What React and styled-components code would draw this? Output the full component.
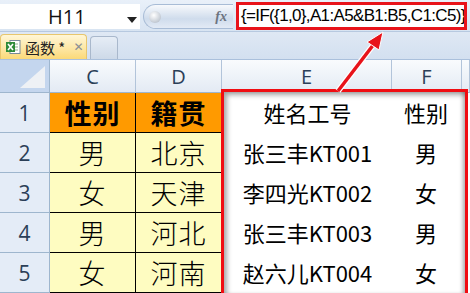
import styled, { createGlobalStyle } from "styled-components";

const Global = createGlobalStyle`
  html, body { margin: 0; padding: 0; }
  body {
    width: 470px;
    height: 293px;
    overflow: hidden;
    background: #fff;
    font-family: "Noto Sans", "Noto Sans CJK SC", sans-serif;
  }
`;

const Page = styled.div`
  position: relative;
  width: 470px;
  height: 293px;
  overflow: hidden;
  display: flex;
  flex-direction: column;
`;

const FormulaBar = styled.div`
  height: 32px;
  flex: none;
  display: flex;
  align-items: stretch;
  padding: 2px 3px 1px 0;
  box-sizing: border-box;
  background: linear-gradient(#e9f0f9, #d8e4f2);
  border-bottom: 1px solid #b7c9e0;
  gap: 3px;
`;

const NameBox = styled.div`
  width: 140px;
  margin: 2px 0 1px;
  background: #fff;
  display: flex;
  align-items: center;
  position: relative;
  font-family: "Open Sans", "Liberation Sans", sans-serif;
  font-size: 20px;
  color: #111;
  span { margin-left: 48px; }
  &::after {
    content: "";
    position: absolute;
    right: 3px;
    top: 13px;
    border-left: 5px solid transparent;
    border-right: 5px solid transparent;
    border-top: 6px solid #222;
  }
`;

const FxPill = styled.div`
  width: 90px;
  margin: 2px 0 1px;
  border-radius: 14px 0 0 14px;
  background: linear-gradient(#f7f9fc, #cfdcec 60%, #e2eaf5);
  border: 1px solid #a8bcd6;
  border-right: none;
  display: flex;
  align-items: center;
  justify-content: space-between;
  padding: 0 6px 0 5px;
  box-sizing: border-box;
`;

const Knob = styled.div`
  width: 12px;
  height: 12px;
  border-radius: 50%;
  background: radial-gradient(circle at 40% 35%, #fff, #a9b3c0);
`;

const Fx = styled.span`
  font-family: "Liberation Serif", serif;
  font-style: italic;
  font-weight: bold;
  font-size: 14px;
  color: #6d7480;
`;

const FormulaBox = styled.div`
  flex: 1;
  border: 3px solid #e8131a;
  background: #fff;
  display: flex;
  align-items: center;
  padding-left: 2px;
  font-family: "Liberation Sans", sans-serif;
  font-size: 17px;
  letter-spacing: -0.65px;
  color: #000;
  white-space: nowrap;
  overflow: hidden;
`;

const TabBar = styled.div`
  height: 27px;
  flex: none;
  display: flex;
  align-items: flex-end;
  gap: 3px;
  background: linear-gradient(#dfe8f4, #d3e0f0);
  border-bottom: 1px solid #aac0dc;
`;

const Tab = styled.div`
  height: ${(p) => (p.$active ? "25px" : "23px")};
  width: ${(p) => (p.$active ? "87px" : "28px")};
  box-sizing: border-box;
  border: 1px solid ${(p) => (p.$active ? "#e7c66d" : "#a9b8cc")};
  border-bottom: none;
  border-radius: 4px 4px 0 0;
  background: ${(p) =>
    p.$active
      ? "linear-gradient(#fff6d6, #fde7a5 55%, #fbd978)"
      : "linear-gradient(#e6edf6, #cdd9e8)"};
  display: flex;
  align-items: center;
  gap: 4px;
  padding-left: 4px;
  white-space: nowrap;
  font-family: "Noto Sans CJK SC", sans-serif;
  font-size: 15px;
  color: #222;
`;

const Close = styled.span`
  margin-left: 4px;
  color: #8a8f96;
  font-family: "DejaVu Sans", sans-serif;
  font-size: 12px;
  font-weight: bold;
`;

const Sheet = styled.div`
  display: grid;
  grid-template-columns: 50px 86px 86px 170px 70px 1fr;
  grid-template-rows: 33px repeat(5, 40px);
`;

const Corner = styled.div`
  background: #c4d6ee;
  border-right: 1px solid #9eb6ce;
  border-bottom: 1px solid #9eb6ce;
  position: relative;
  &::after {
    content: "";
    position: absolute;
    right: 4px;
    bottom: 4px;
    width: 0;
    height: 0;
    border-left: 25px solid transparent;
    border-bottom: 22px solid #eef1f5;
  }
`;

const ColHead = styled.div`
  background: linear-gradient(#f9fbfd, #e3eaf4);
  border-right: 1px solid #b2c4da;
  border-bottom: 1px solid #9eb6ce;
  display: flex;
  align-items: center;
  justify-content: center;
  font-family: "Open Sans", "Liberation Sans", sans-serif;
  font-size: 20px;
  color: #2b3f58;
`;

const RowHead = styled.div`
  grid-column: 1;
  background: #e4ecf7;
  border-right: 1px solid #9eb6ce;
  border-bottom: 1px solid #9eb6ce;
  display: flex;
  align-items: center;
  justify-content: center;
  font-family: "Open Sans", "Liberation Sans", sans-serif;
  font-size: 21px;
  color: #2b3f58;
`;

const Cell = styled.div`
  border-right: 1px solid #000;
  border-bottom: 1px solid #000;
  display: flex;
  align-items: center;
  justify-content: center;
  font-family: "Noto Sans CJK SC", sans-serif;
  font-size: 27px;
  font-weight: ${(p) => (p.$head ? 700 : 300)};
  color: #000;
  letter-spacing: 1px;
  background-color: ${(p) => (p.$head ? "#ff9a00" : "#fdfa8c")};
  background-image: ${(p) =>
    p.$head
      ? "none"
      : "radial-gradient(circle, #ffffff 0.6px, transparent 0.8px)"};
  background-size: 2px 2px;
`;

const Pasted = styled.div`
  grid-column: 4 / 7;
  grid-row: 2 / 7;
  margin: -4px 2px 0 -1px;
  border: 3px solid #f00d12;
  border-bottom: none;
  background: #fff;
  box-shadow: inset 5px 5px 5px -2px rgba(0, 0, 0, 0.35),
    inset -4px 0 4px -2px rgba(0, 0, 0, 0.35);
  display: grid;
  grid-template-columns: 167px 70px;
  grid-auto-rows: 40px;
  font-family: "Noto Sans CJK SC", sans-serif;
  font-size: 22px;
  color: #000;
  overflow: hidden;
`;

const Item = styled.div`
  display: flex;
  align-items: center;
  justify-content: center;
`;

const Arrow = styled.svg`
  position: absolute;
  left: 0;
  top: 0;
  pointer-events: none;
`;

const ExcelIcon = () => (
  <svg width="16" height="16" viewBox="0 0 16 16">
    <rect x="5" y="1.5" width="10" height="13" fill="#fff" stroke="#7a8a99" />
    <line x1="8" y1="5" x2="13" y2="5" stroke="#8fb08f" />
    <line x1="8" y1="8" x2="13" y2="8" stroke="#8fb08f" />
    <line x1="8" y1="11" x2="13" y2="11" stroke="#8fb08f" />
    <rect x="1" y="3" width="9" height="10" fill="#2e8b3a" />
    <path d="M3 5 L8 11 M8 5 L3 11" stroke="#fff" strokeWidth="1.6" />
  </svg>
);

const left = [
  ["男", "北京"],
  ["女", "天津"],
  ["男", "河北"],
  ["女", "河南"],
];

const right = [
  ["姓名工号", "性别"],
  ["张三丰KT001", "男"],
  ["李四光KT002", "女"],
  ["张三丰KT003", "男"],
  ["赵六儿KT004", "女"],
];

export default function App() {
  return (
    <Page>
      <Global />
      <FormulaBar>
        <NameBox>
          <span>H11</span>
        </NameBox>
        <FxPill>
          <Knob />
          <Fx>fx</Fx>
        </FxPill>
        <FormulaBox>{"{=IF({1,0},A1:A5&B1:B5,C1:C5)}"}</FormulaBox>
      </FormulaBar>
      <TabBar>
        <Tab $active>
          <ExcelIcon />
          <span>函数 *</span>
          <Close>✕</Close>
        </Tab>
        <Tab />
      </TabBar>
      <Sheet>
        <Corner />
        {["C", "D", "E", "F", ""].map((c, i) => (
          <ColHead key={i}>{c}</ColHead>
        ))}
        <RowHead>1</RowHead>
        <Cell $head>性别</Cell>
        <Cell $head>籍贯</Cell>
        {left.map((r, i) => [
          <RowHead key={"h" + i}>{i + 2}</RowHead>,
          <Cell key={"a" + i}>{r[0]}</Cell>,
          <Cell key={"b" + i}>{r[1]}</Cell>,
        ])}
        <Pasted>
          {right.map((r, i) => [
            <Item key={"n" + i}>{r[0]}</Item>,
            <Item key={"s" + i}>{r[1]}</Item>,
          ])}
        </Pasted>
      </Sheet>
      <Arrow width="470" height="293">
        <line x1="338" y1="91" x2="374" y2="44" stroke="#fff" strokeWidth="6" />
        <line x1="338" y1="91" x2="374" y2="44" stroke="#e8131a" strokeWidth="3.5" />
        <polygon points="383,32 367,42 379,50" fill="#e8131a" stroke="#fff" strokeWidth="1" />
      </Arrow>
    </Page>
  );
}
